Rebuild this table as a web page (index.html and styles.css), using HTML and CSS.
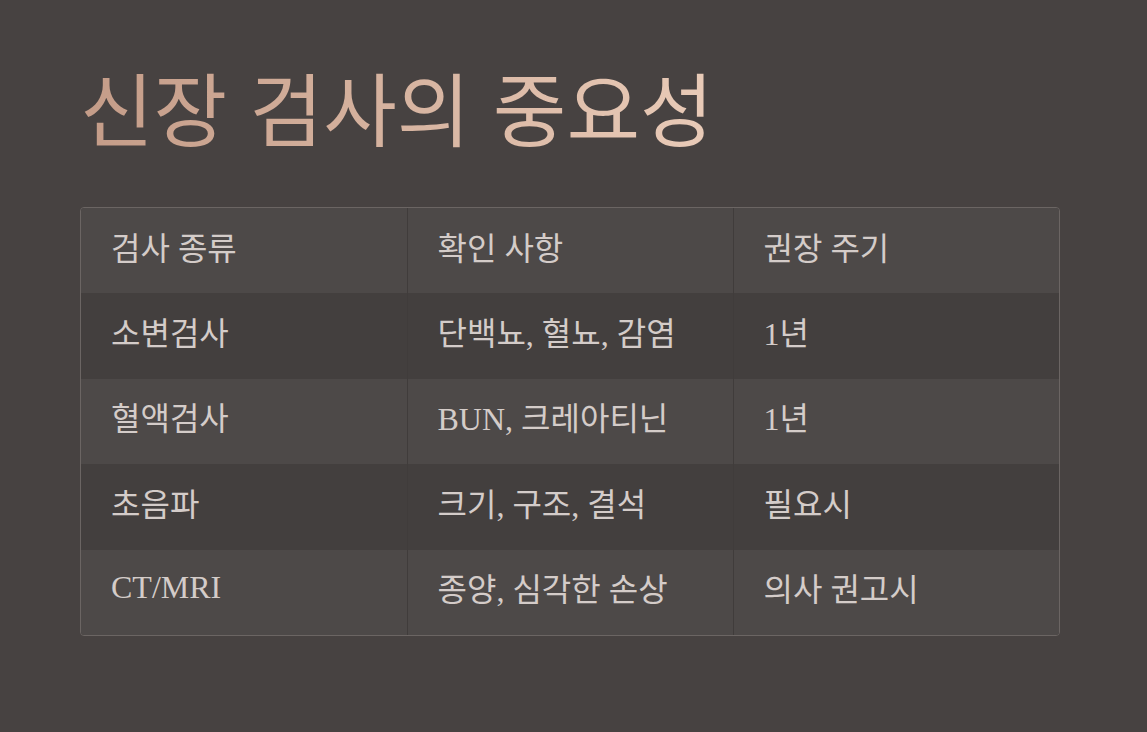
FILE: index.html
```html
<!DOCTYPE html>
<html lang="ko">
<head>
<meta charset="utf-8">
<link rel="stylesheet" href="styles.css">
</head>
<body>
<main class="page">
  <h1 class="title">신장 검사의 중요성</h1>
  <div class="table-wrap">
    <table class="exam-table">
      <thead>
        <tr><th>검사 종류</th><th>확인 사항</th><th>권장 주기</th></tr>
      </thead>
      <tbody>
        <tr><td>소변검사</td><td>단백뇨, 혈뇨, 감염</td><td>1년</td></tr>
        <tr><td>혈액검사</td><td>BUN, 크레아티닌</td><td>1년</td></tr>
        <tr><td>초음파</td><td>크기, 구조, 결석</td><td>필요시</td></tr>
        <tr><td>CT/MRI</td><td>종양, 심각한 손상</td><td>의사 권고시</td></tr>
      </tbody>
    </table>
  </div>
</main>
</body>
</html>
```
FILE: styles.css
```css
html, body {
  margin: 0;
  padding: 0;
  background: #474241;
}
body {
  font-family: "Liberation Serif", "Noto Sans CJK KR", serif;
  color: #d4ccc9;
}
.page {
  padding: 53px 87px 0 80px;
}
.title {
  margin: 0 0 50px 0;
  font-family: "Noto Sans CJK KR", sans-serif;
  font-weight: 400;
  font-size: 80px;
  line-height: 104px;
  background: linear-gradient(90deg, #c49c88 0%, #e9cbb8 100%);
  -webkit-background-clip: text;
  background-clip: text;
  color: transparent;
  display: inline-block;
}
.table-wrap {
  border: 1px solid #6b6563;
  border-radius: 4px;
  overflow: hidden;
}
.exam-table {
  width: 100%;
  border-collapse: collapse;
  table-layout: fixed;
  font-size: 32px;
}
.exam-table th,
.exam-table td {
  text-align: left;
  font-weight: 400;
  padding: 0 30px 10px 30px;
  height: 85.4px;
  box-sizing: border-box;
  border-left: 1px solid #403c3b;
}
.exam-table th:first-child,
.exam-table td:first-child {
  border-left: none;
}
.exam-table thead tr {
  background: #4d4948;
}
.exam-table tbody tr:nth-child(odd) {
  background: #433f3e;
}
.exam-table tbody tr:nth-child(even) {
  background: #4d4948;
}
```
